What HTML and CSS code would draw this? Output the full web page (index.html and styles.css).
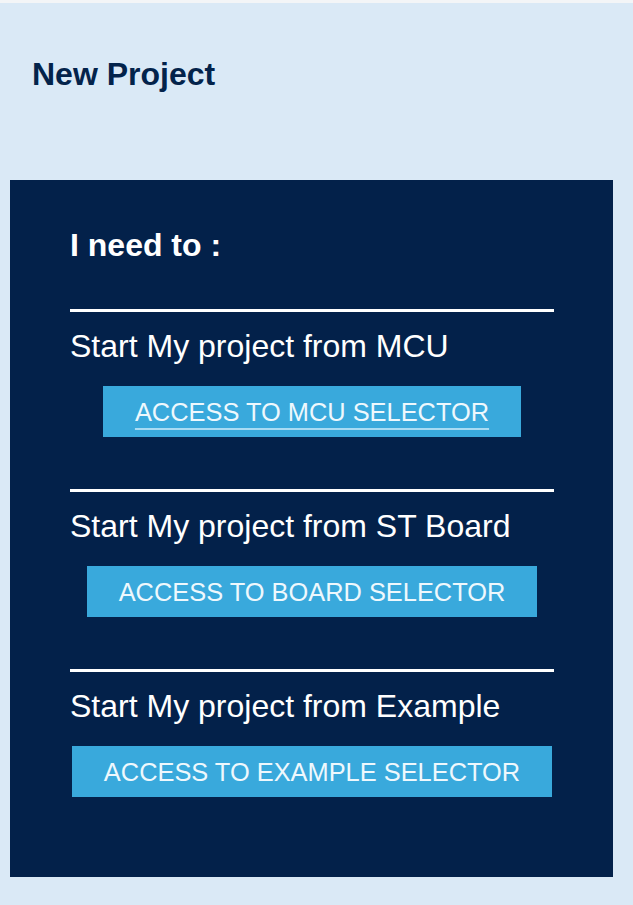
FILE: index.html
```html
<!DOCTYPE html>
<html lang="en">
<head>
<meta charset="utf-8">
<title>New Project</title>
<link rel="stylesheet" href="styles.css">
</head>
<body>
<div class="topbar"></div>
<main class="page">
  <h1 class="title">New Project</h1>
  <section class="panel">
    <h2 class="need">I need to :</h2>
    <div class="option">
      <p class="label">Start My project from MCU</p>
      <a class="btn btn-active" href="#">ACCESS TO MCU SELECTOR</a>
    </div>
    <div class="option">
      <p class="label">Start My project from ST Board</p>
      <a class="btn" href="#">ACCESS TO BOARD SELECTOR</a>
    </div>
    <div class="option">
      <p class="label">Start My project from Example</p>
      <a class="btn" href="#">ACCESS TO EXAMPLE SELECTOR</a>
    </div>
  </section>
</main>
</body>
</html>
```
FILE: styles.css
```css
html, body {
  margin: 0;
  padding: 0;
}
body {
  background: #dae9f6;
  font-family: "Liberation Sans", Arial, sans-serif;
  width: 633px;
  height: 905px;
  overflow: hidden;
}
.topbar {
  height: 3px;
  background: #f3f5f7;
}
.page {
  padding: 0 20px 0 10px;
}
.title {
  margin: 0;
  padding: 53px 0 0 22px;
  font-size: 32px;
  line-height: 37px;
  font-weight: bold;
  color: #03234b;
  height: 124px;
  box-sizing: content-box;
}
.panel {
  background: #03214a;
  padding: 47px 59px 80px 60px;
  color: #ffffff;
}
.need {
  margin: 0 0 45px;
  font-size: 32px;
  line-height: 37px;
  font-weight: bold;
}
.option {
  border-top: 3px solid #ffffff;
  padding-top: 16px;
  display: flex;
  flex-direction: column;
  align-items: center;
  margin-bottom: 52px;
}
.option:last-child {
  margin-bottom: 0;
}
.label {
  align-self: stretch;
  margin: 0 0 21px;
  font-size: 32px;
  line-height: 37px;
}
.btn {
  display: flex;
  align-items: center;
  justify-content: center;
  height: 51px;
  padding: 2px 32px 0;
  background: #39a9dc;
  color: #eef8fd;
  font-size: 25.4px;
  text-decoration: none;
  box-sizing: border-box;
}
.btn-active {
  text-decoration: underline;
  text-decoration-color: #a9dcf4;
  text-underline-offset: 7px;
  text-decoration-thickness: 2px;
}
```
